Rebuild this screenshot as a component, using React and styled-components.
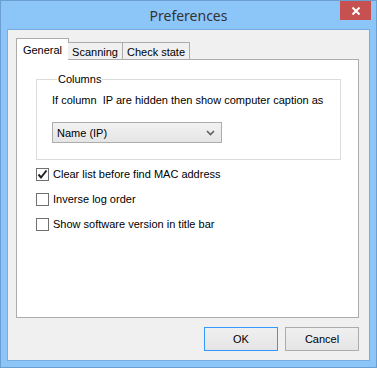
import React from 'react';
import styled, { createGlobalStyle } from 'styled-components';

const GlobalStyle = createGlobalStyle`
  html, body {
    margin: 0;
    padding: 0;
    background: #ffffff;
  }
  * {
    box-sizing: border-box;
  }
`;

// --- Window frame ---
const Window = styled.div`
  width: 377px;
  height: 368px;
  border: 1px solid #6b9fcf;
  background: #8cc5f8;
  display: flex;
  flex-direction: column;
  font-family: 'Liberation Sans', Arial, sans-serif;
  font-size: 11px;
  color: #000;
`;

const TitleBar = styled.div`
  height: 29px;
  display: grid;
  grid-template-columns: 1fr auto 1fr;
  align-items: start;
`;

const Title = styled.div`
  grid-column: 2;
  padding-top: 5px;
  font-family: 'Noto Sans', 'Open Sans', sans-serif;
  font-size: 14px;
  color: #333;
`;

const CloseButton = styled.div`
  grid-column: 3;
  justify-self: end;
  width: 31px;
  height: 19px;
  margin-right: 5px;
  background: #c75050;
  display: flex;
  align-items: center;
  justify-content: center;
`;

const Client = styled.div`
  flex: 1;
  margin: 0 6px 6px;
  border: 1px solid #76acdf;
  background: #f0f0f0;
  display: flex;
  flex-direction: column;
  padding: 8px 10px 9px 8px;
`;

// --- Tabs ---
const TabStrip = styled.div`
  display: flex;
  align-items: flex-end;
  height: 22px;
  position: relative;
  z-index: 1;
`;

const Tab = styled.div`
  width: ${(p) => p.$w}px;
  height: ${(p) => (p.$active ? '22px' : '18px')};
  padding-top: ${(p) => (p.$active ? '4px' : '2px')};
  text-align: center;
  border: 1px solid #acacac;
  border-bottom: ${(p) => (p.$active ? 'none' : '1px solid #acacac')};
  border-left: ${(p) => (p.$first || p.$active ? '1px solid #acacac' : 'none')};
  background: ${(p) => (p.$active ? '#ffffff' : '#f0f0f0')};
  margin-right: ${(p) => (p.$active ? '-1px' : '0')};
  line-height: 14px;
  white-space: nowrap;
`;

const Panel = styled.div`
  height: 259px;
  margin-top: -1px;
  border: 1px solid #acacac;
  background: #ffffff;
  padding: 12px 17px 0 19px;
`;

// --- Group box ---
const GroupBox = styled.fieldset`
  margin: 0;
  border: 1px solid #dcdcdc;
  padding: 2px 15px 16px 15px;
`;

const Legend = styled.legend`
  margin-left: 5px;
  padding: 0 1px;
  line-height: 14px;
`;

const Caption = styled.div`
  line-height: 14px;
  margin: 5px 0 15px;
  white-space: nowrap;
`;

const Select = styled.div`
  width: 170px;
  height: 21px;
  border: 1px solid #acacac;
  background: linear-gradient(#f2f2f2, #e5e5e5);
  display: flex;
  align-items: center;
  justify-content: space-between;
  padding: 0 6px 0 4px;
`;

// --- Checkboxes ---
const Options = styled.div`
  display: flex;
  flex-direction: column;
  gap: 12px;
  margin-top: 8px;
`;

const Option = styled.label`
  display: flex;
  align-items: center;
  gap: 4px;
  line-height: 13px;
`;

const Box = styled.span`
  width: 13px;
  height: 13px;
  border: 1px solid #707070;
  background: #fff;
  display: flex;
  align-items: center;
  justify-content: center;
`;

// --- Buttons ---
const ButtonRow = styled.div`
  display: flex;
  justify-content: flex-end;
  gap: 7px;
  margin-top: 9px;
`;

const Button = styled.div`
  width: 74px;
  height: 24px;
  border: 1px solid ${(p) => (p.$default ? '#3399ff' : '#acacac')};
  background: linear-gradient(#f0f0f0, #e5e5e5);
  display: flex;
  align-items: center;
  justify-content: center;
`;

const Check = () => (
  <svg width="11" height="11" viewBox="0 0 11 11">
    <path d="M1.5 5.5 L4 8.5 L9.5 1.5" fill="none" stroke="#222" strokeWidth="2" />
  </svg>
);

const Chevron = () => (
  <svg width="9" height="6" viewBox="0 0 9 6">
    <path d="M1 1 L4.5 4.5 L8 1" fill="none" stroke="#606060" strokeWidth="1.6" />
  </svg>
);

const CloseGlyph = () => (
  <svg width="10" height="10" viewBox="0 0 10 10">
    <path d="M1.5 1.5 L8.5 8.5 M8.5 1.5 L1.5 8.5" stroke="#fff" strokeWidth="2" />
  </svg>
);

const options = [
  { label: 'Clear list before find MAC address', checked: true },
  { label: 'Inverse log order', checked: false },
  { label: 'Show software version in title bar', checked: false },
];

const App = () => {
  return (
    <>
      <GlobalStyle />
      <Window>
        <TitleBar>
          <Title>Preferences</Title>
          <CloseButton>
            <CloseGlyph />
          </CloseButton>
        </TitleBar>
        <Client>
          <TabStrip>
            <Tab $active $first $w={53}>General</Tab>
            <Tab $w={55}>Scanning</Tab>
            <Tab $w={67}>Check state</Tab>
          </TabStrip>
          <Panel>
            <GroupBox>
              <Legend>Columns</Legend>
              <Caption>If column&nbsp; IP are hidden then show computer caption as</Caption>
              <Select>
                <span>Name (IP)</span>
                <Chevron />
              </Select>
            </GroupBox>
            <Options>
              {options.map((o) => (
                <Option key={o.label}>
                  <Box>{o.checked && <Check />}</Box>
                  {o.label}
                </Option>
              ))}
            </Options>
          </Panel>
          <ButtonRow>
            <Button $default>OK</Button>
            <Button>Cancel</Button>
          </ButtonRow>
        </Client>
      </Window>
    </>
  );
};

export default App;
